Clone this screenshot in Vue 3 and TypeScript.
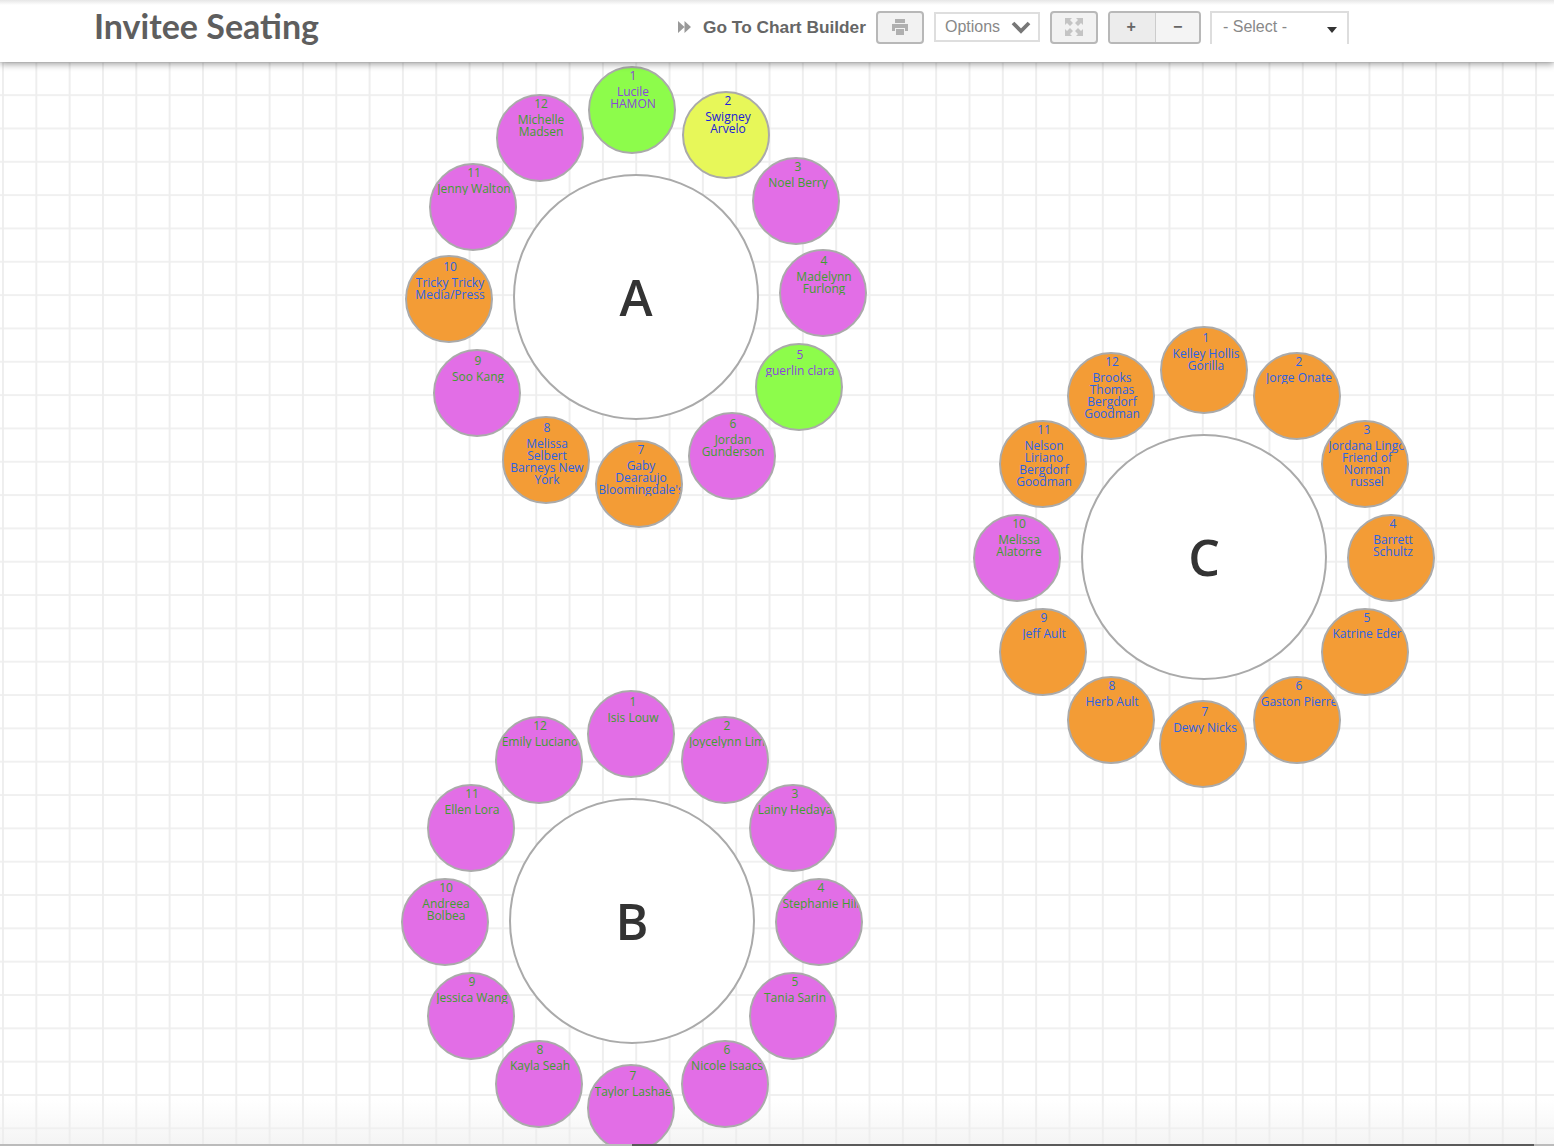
<template>
  <div class="page">
    <header class="topbar">
      <h1 class="title">Invitee Seating</h1>
      <div class="tools">
        <a class="builder-link">
          <svg width="13" height="12" viewBox="0 0 13 12">
            <path d="M0 0l6.5 6L0 12zM6.5 0L13 6l-6.5 6z" fill="#999" />
          </svg>
          Go To Chart Builder
        </a>
        <button class="btn print-btn">
          <svg width="18" height="18" viewBox="0 0 18 18" fill="#b0b0b0">
            <path d="M4 1h10v4H4z" />
            <path d="M1 6h16v7h-3v-3H4v3H1z" />
            <path d="M5 11h8v6H5z" />
          </svg>
        </button>
        <div class="options">
          <span>Options</span>
          <svg width="20" height="13" viewBox="0 0 20 13">
            <path d="M2 2l8 8 8-8" fill="none" stroke="#777" stroke-width="3.8" />
          </svg>
        </div>
        <button class="btn full-btn">
          <svg width="20" height="20" viewBox="0 0 20 20" fill="#c4c4c4">
            <path d="M1 1h7L6 3l3 3-3 3-3-3-2 2zM19 1v7l-2-2-3 3-3-3 3-3-2-2zM1 19v-7l2 2 3-3 3 3-3 3 2 2zM19 19h-7l2-2-3-3 3-3 3 3 2-2z" />
          </svg>
        </button>
        <div class="zoom-group">
          <button class="zoom-btn plus">+</button>
          <button class="zoom-btn">&minus;</button>
        </div>
        <div class="select">
          <span>- Select -</span>
          <i class="caret"></i>
        </div>
      </div>
    </header>

    <main class="canvas">
      <div
        v-for="t in tables"
        :key="t.name"
        class="table"
        :style="{ left: t.x - 123 + 'px', top: t.y - 123 + 'px' }"
      >
        {{ t.name }}
      </div>
      <template v-for="t in tables" :key="t.name">
        <div
          v-for="(s, i) in t.seats"
          :key="i"
          class="seat"
          :class="[s.kind, { low: t.low.includes(i + 1), nudge: t.nudge.includes(i + 1), wide: t.wide.includes(i + 1) }]"
          :style="{ left: s.x - 44 + 'px', top: s.y - 44 + 'px' }"
        >
          <div class="seat-text">
            <div class="line">{{ i + 1 }}</div>
            <div class="name">
              <div v-for="l in s.lines" :key="l" class="line">{{ l }}</div>
            </div>
          </div>
        </div>
      </template>
    </main>
    <div class="bottom-line"></div>
  </div>
</template>

<script setup lang="ts">
type Kind = "vip" | "guest" | "ok" | "maybe";

interface Seat {
  x: number;
  y: number;
  kind: Kind;
  lines: string[];
}

const seat = (x: number, y: number, kind: Kind, ...lines: string[]): Seat => ({ x, y, kind, lines });

// low / nudge: labels sitting 2px lower / 1px further right, wide: long name running past the label box
const tables = [
  {
    name: "A",
    x: 636,
    y: 297,
    low: [4, 5, 6, 8, 9, 10],
    nudge: [2, 3],
    wide: [7],
    seats: [
      seat(632, 110, "ok", "Lucile", "HAMON"),
      seat(726, 135, "maybe", "Swigney", "Arvelo"),
      seat(796, 201, "guest", "Noel Berry"),
      seat(823, 293, "guest", "Madelynn", "Furlong"),
      seat(799, 387, "ok", "guerlin clara"),
      seat(732, 456, "guest", "Jordan", "Gunderson"),
      seat(639, 484, "vip", "Gaby", "Dearaujo", "Bloomingdale's"),
      seat(546, 460, "vip", "Melissa", "Selbert", "Barneys New", "York"),
      seat(477, 393, "guest", "Soo Kang"),
      seat(449, 299, "vip", "Tricky Tricky", "Media/Press"),
      seat(473, 207, "guest", "Jenny Walton"),
      seat(540, 138, "guest", "Michelle", "Madsen"),
    ],
  },
  {
    name: "C",
    x: 1204,
    y: 557,
    low: [1, 7],
    nudge: [1, 2, 3, 4, 5, 6, 7, 10],
    wide: [],
    seats: [
      seat(1204, 370, "vip", "Kelley Hollis", "Gorilla"),
      seat(1297, 396, "vip", "Jorge Onate"),
      seat(1365, 464, "vip", "Jordana Lingo", "Friend of", "Norman", "russel"),
      seat(1391, 558, "vip", "Barrett", "Schultz"),
      seat(1365, 652, "vip", "Katrine Eder"),
      seat(1297, 720, "vip", "Gaston Pierre"),
      seat(1203, 744, "vip", "Dewy Nicks"),
      seat(1111, 720, "vip", "Herb Ault"),
      seat(1043, 652, "vip", "Jeff Ault"),
      seat(1017, 558, "guest", "Melissa", "Alatorre"),
      seat(1043, 464, "vip", "Nelson", "Liriano", "Bergdorf", "Goodman"),
      seat(1111, 396, "vip", "Brooks", "Thomas", "Bergdorf", "Goodman"),
    ],
  },
  {
    name: "B",
    x: 632,
    y: 921,
    low: [1, 7],
    nudge: [1, 2, 3, 4, 5, 6, 7],
    wide: [],
    seats: [
      seat(631, 734, "guest", "Isis Louw"),
      seat(725, 760, "guest", "Joycelynn Lim"),
      seat(793, 828, "guest", "Lainy Hedaya"),
      seat(819, 922, "guest", "Stephanie Hill"),
      seat(793, 1016, "guest", "Tania Sarin"),
      seat(725, 1084, "guest", "Nicole Isaacs"),
      seat(631, 1108, "guest", "Taylor Lashae"),
      seat(539, 1084, "guest", "Kayla Seah"),
      seat(471, 1016, "guest", "Jessica Wang"),
      seat(445, 922, "guest", "Andreea", "Bolbea"),
      seat(471, 828, "guest", "Ellen Lora"),
      seat(539, 760, "guest", "Emily Luciano"),
    ],
  },
];
</script>

<style>
html,
body {
  margin: 0;
  background: #fff;
}
</style>

<style scoped>
.page {
  position: relative;
  width: 1554px;
  height: 1146px;
  overflow: hidden;
  font-family: "Liberation Sans", Arial, sans-serif;
}

.topbar {
  position: relative;
  z-index: 5;
  height: 62px;
  box-sizing: border-box;
  display: flex;
  align-items: center;
  padding: 0 0 8px 94px;
  background: linear-gradient(#e6e6e6 0, #fff 5px);
  box-shadow: 0 2px 7px rgba(0, 0, 0, 0.4);
}

.title {
  margin: -3px 0 0;
  font-family: Lato, sans-serif;
  font-size: 34px;
  font-weight: 700;
  color: #5e5e5e;
  white-space: nowrap;
}

.tools {
  display: flex;
  align-items: center;
  margin-left: 359px;
}

.builder-link {
  display: flex;
  align-items: center;
  gap: 12px;
  font-size: 17.3px;
  font-weight: 700;
  color: #666;
  white-space: nowrap;
}

.btn {
  box-sizing: border-box;
  height: 33px;
  width: 48px;
  padding: 0;
  display: flex;
  align-items: center;
  justify-content: center;
  border: 2px solid #b8b8b8;
  border-radius: 4px;
  background: #f2f2f2;
}

.print-btn {
  margin-left: 10px;
}

.options {
  box-sizing: border-box;
  width: 106px;
  height: 30px;
  margin: 0 10px 0 10px;
  padding: 0 7px 0 9px;
  display: flex;
  align-items: center;
  justify-content: space-between;
  border: 2px solid #dedede;
  font-size: 16px;
  color: #888;
}

.zoom-group {
  box-sizing: border-box;
  display: flex;
  height: 33px;
  width: 93px;
  margin-left: 10px;
  border: 2px solid #b8b8b8;
  border-radius: 4px;
  overflow: hidden;
}

.zoom-btn {
  flex: 1;
  padding: 0;
  border: 0;
  background: #f4f4f4;
  font-family: "Liberation Sans", Arial, sans-serif;
  font-size: 16px;
  font-weight: 700;
  color: #666;
}

.zoom-btn.plus {
  padding-right: 3px;
  border-right: 1px solid #ccc;
  background: #ececec;
}

.select {
  box-sizing: border-box;
  width: 139px;
  height: 33px;
  margin: 0 0 0 9px;
  padding: 0 10px 3px 11px;
  display: flex;
  align-items: center;
  justify-content: space-between;
  border: 2px solid #ddd;
  border-bottom: 0;
  font-size: 16px;
  color: #888;
}

.caret {
  margin-top: 6px;
  border-top: 6px solid #333;
  border-left: 5px solid transparent;
  border-right: 5px solid transparent;
}

.canvas {
  position: absolute;
  inset: 0;
  background-color: #fff;
  background-image:
    linear-gradient(to right, #eeeeee 2px, transparent 2px),
    linear-gradient(to bottom, #f0f0f0 2px, transparent 2px),
    linear-gradient(to bottom, #fff 1100px, #f4f4f4 1146px);
  background-size: 33.333px 33.333px, 33.333px 33.333px, 100% 100%;
  background-position: 2px 27.5px, 2px 27.5px, 0 0;
}

.table {
  position: absolute;
  box-sizing: border-box;
  width: 246px;
  height: 246px;
  display: flex;
  align-items: center;
  justify-content: center;
  border: 2px solid #aaa;
  border-radius: 50%;
  background: #fff;
  font-family: "Open Sans", sans-serif;
  font-size: 50px;
  font-weight: 600;
  color: #333;
}

.seat {
  position: absolute;
  box-sizing: border-box;
  width: 88px;
  height: 88px;
  border: 2px solid #aaa;
  border-radius: 50%;
  overflow: hidden;
  font-family: "Open Sans", sans-serif;
  font-size: 12px;
  line-height: 12px;
}

.seat-text {
  width: 76px;
  margin: 2px 0 0 5px;
  overflow: hidden;
  display: flex;
  flex-direction: column;
  align-items: center;
}

.low .seat-text {
  margin-top: 4px;
}

.nudge .seat-text {
  margin-left: 6px;
}

.wide .seat-text {
  width: 82px;
  margin-left: 3px;
}

.name {
  margin-top: 4px;
  width: 100%;
  display: flex;
  flex-direction: column;
  align-items: center;
}

.line {
  white-space: nowrap;
}

.guest {
  background: #e26ee6;
  color: #3f9f2f;
}

.vip {
  background: #f39c36;
  color: #2a62e6;
}

.ok {
  background: #8dfc4b;
  color: #8a46dc;
}

.maybe {
  background: #e7f759;
  color: #2020d8;
}

.bottom-line {
  position: absolute;
  z-index: 4;
  left: 0;
  right: 0;
  bottom: 0;
  height: 2px;
  background: linear-gradient(to right, #bbb 632px, #5a5a5a 632px, #5a5a5a 1534px, #bbb 1534px);
}
</style>
